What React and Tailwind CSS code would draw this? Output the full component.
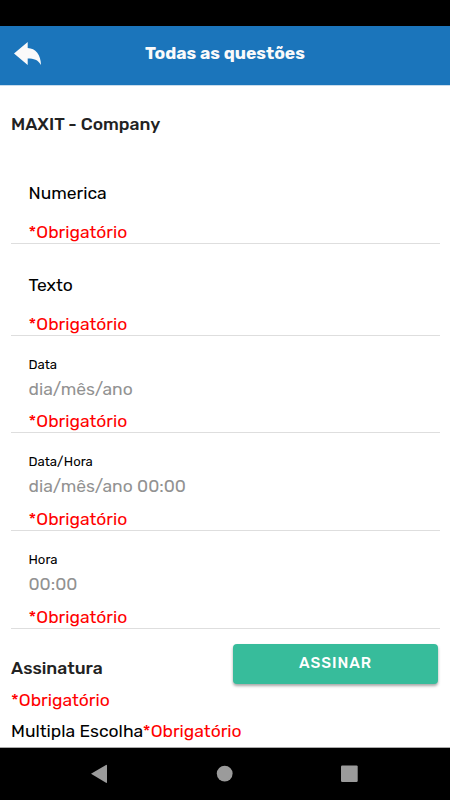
import clsx from 'clsx'

const fields = [
  { label: 'Numerica', box: 'h-[92px] pt-[29px]' },
  { label: 'Texto', box: 'h-[92px] pt-[29px]' },
  { label: 'Data', placeholder: 'dia/mês/ano', box: 'h-[97px] pt-[21px]' },
  { label: 'Data/Hora', placeholder: 'dia/mês/ano 00:00', box: 'h-[98px] pt-[21px]' },
  { label: 'Hora', placeholder: '00:00', box: 'h-[98px] pt-[21px]' },
]

const Required = ({ className }) => (
  <span className={clsx('text-[#ff0000] whitespace-nowrap', className)}>*Obrigatório</span>
)

const Header = () => (
  <header className="relative flex h-[59px] shrink-0 items-center justify-center bg-[#1b75bb] pb-[6px] shadow-[0_1px_0_#c8dcec]">
    <button className="absolute left-[14px] top-[16px]" aria-label="Voltar">
      <svg width="28" height="24" viewBox="0 0 28 24" fill="#fafafa">
        <path d="M0 11.5 13.7 0v6C21.5 6.2 27 13 27 23c-3.2-5.2-7-6.4-13.3-6.4V23Z" />
      </svg>
    </button>
    <h1 className="leading-6 font-bold text-[#fafafa]">Todas as questões</h1>
  </header>
)

const Field = ({ label, placeholder, box }) => (
  <div className={clsx('flex flex-col justify-between border-b border-[#dedede] pl-[17.5px]', box)}>
    <div className="flex flex-col gap-1">
      <label className={placeholder ? 'text-[13.125px] leading-4' : 'leading-6'}>{label}</label>
      {placeholder && <span className="leading-6 text-[#929292]">{placeholder}</span>}
    </div>
    <Required className="leading-[22px]" />
  </div>
)

const NavBar = () => (
  <nav className="h-[53px] shrink-0 border-t border-[#aaaaaa] bg-black">
    <svg width="450" height="52" viewBox="0 0 450 52" fill="#9b9b9b">
      <path d="M91 25.7 106 17q1-.5 1 .6v16.6q0 1.1-1 .6Z" />
      <circle cx="224.7" cy="25.6" r="7.9" />
      <rect x="341" y="17.4" width="16.7" height="16.6" rx="1.2" />
    </svg>
  </nav>
)

export default function App() {
  return (
    <div className="flex h-[800px] w-[450px] flex-col overflow-hidden bg-white font-['Rubik','Roboto',sans-serif] text-[17.5px] text-black">
      <div className="h-[26px] shrink-0 bg-black" />
      <Header />
      <main className="flex-1 pl-[11px] pr-[10px] pt-[27px]">
        <h2 className="mb-4 leading-6 font-medium text-[#222222]">MAXIT - Company</h2>

        {fields.map(field => (
          <Field key={field.label} {...field} />
        ))}

        <div className="flex justify-between pt-[15px] pr-[2px]">
          <div className="flex flex-col gap-2 pt-3">
            <h3 className="leading-6 font-medium text-[#222222]">Assinatura</h3>
            <Required className="leading-6" />
          </div>
          <button className="flex h-[40px] w-[205px] items-center justify-center rounded-[4px] bg-[#37bc9b] pb-[2px] text-[15.3px] font-medium tracking-[0.92px] text-white shadow-[0_2px_3px_rgba(0,0,0,0.35)]">
            ASSINAR
          </button>
        </div>
        <p className="pt-[7px] leading-6 whitespace-nowrap">
          Multipla Escolha<Required />
        </p>
      </main>
      <NavBar />
    </div>
  )
}
